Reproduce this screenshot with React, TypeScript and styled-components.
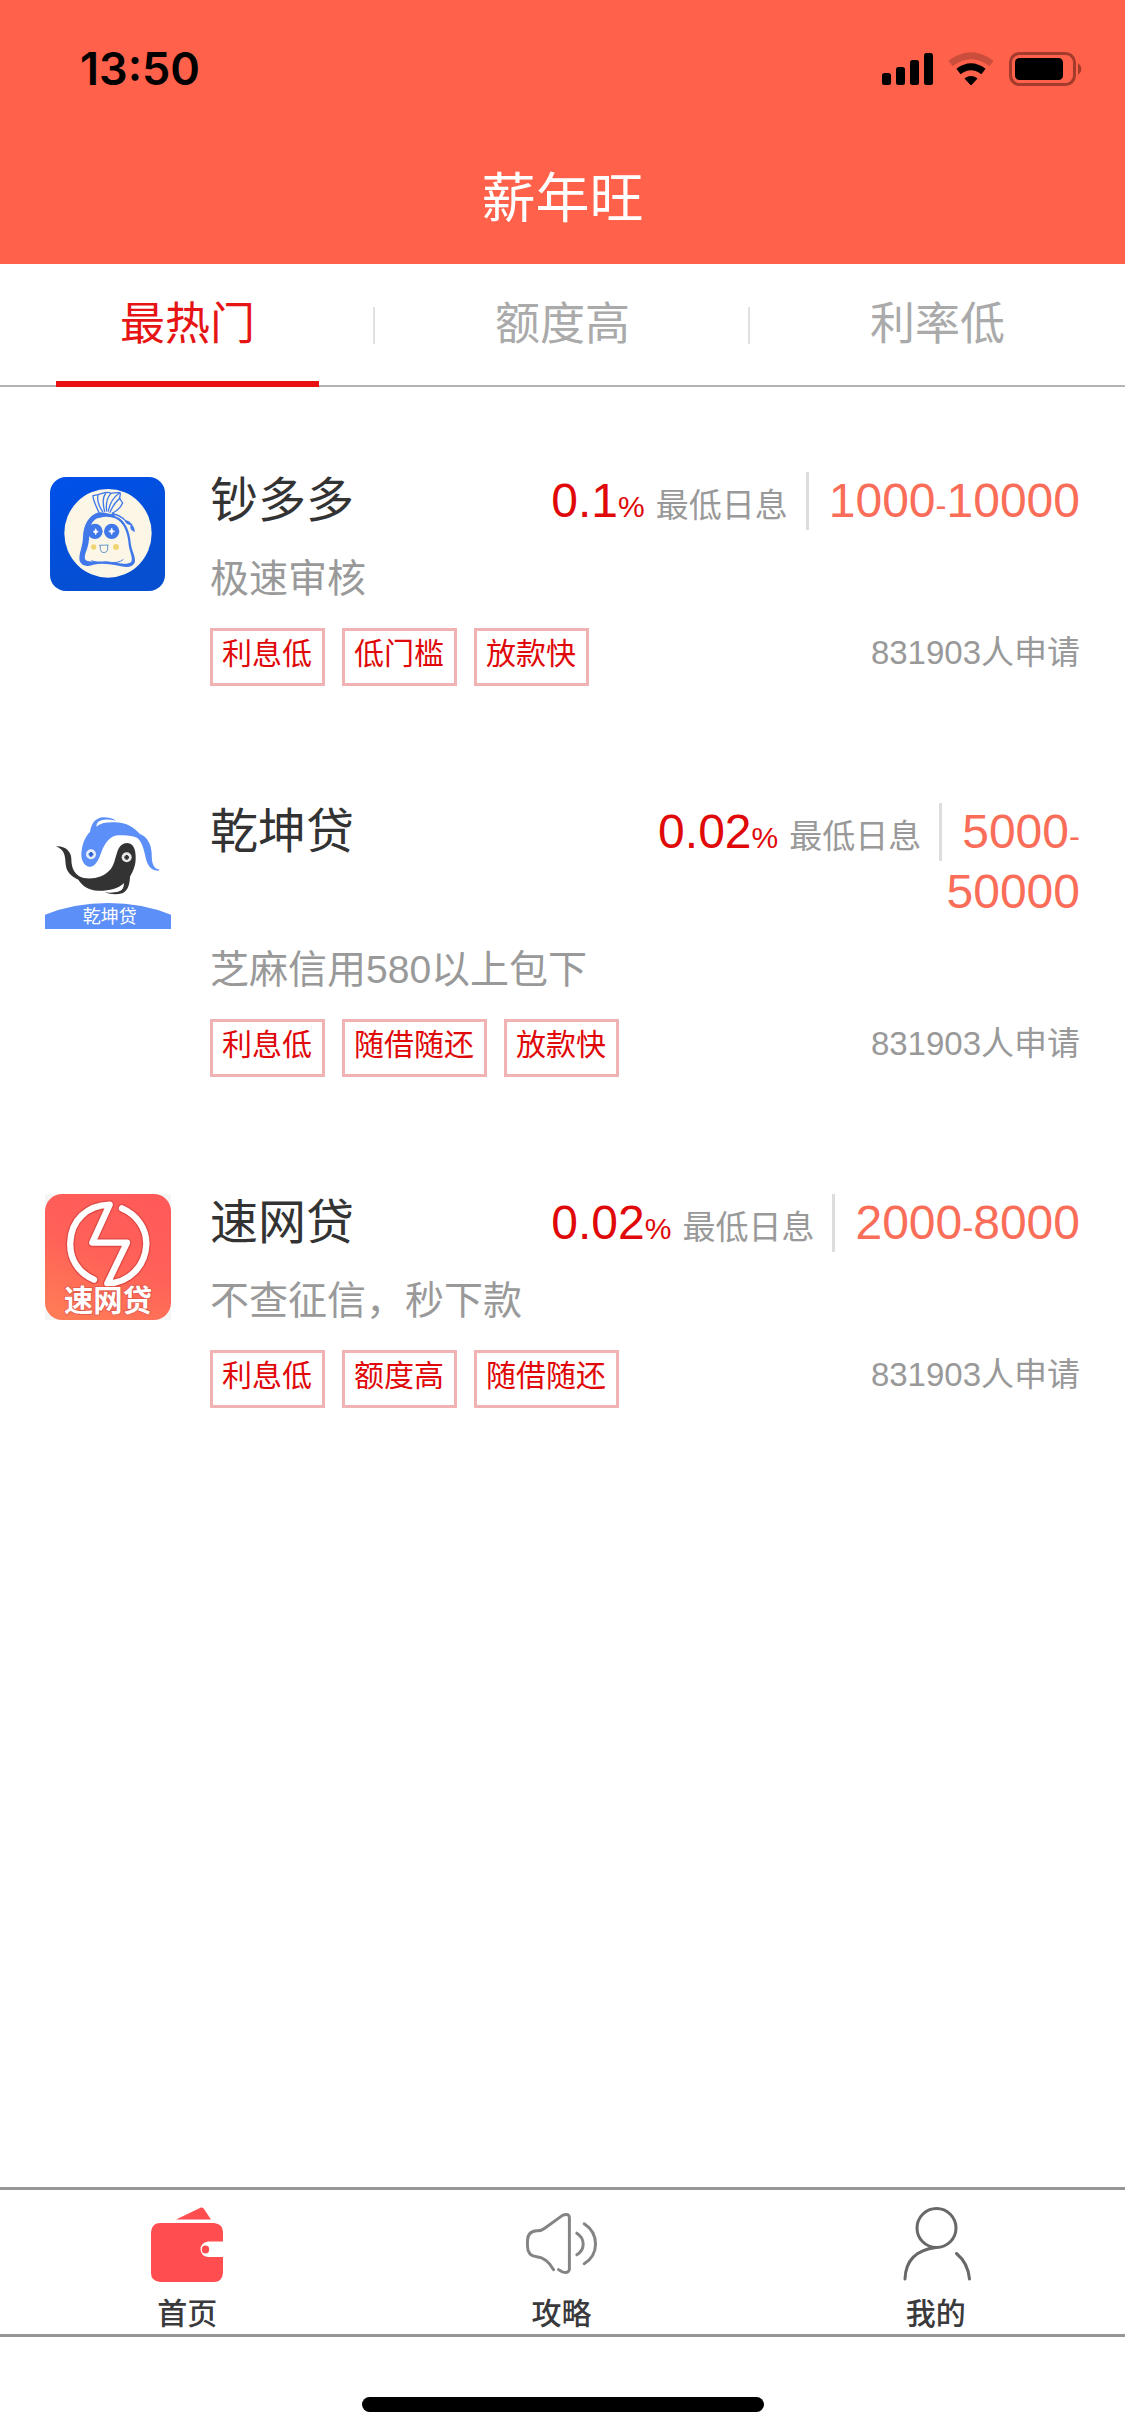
import React from "react";
import styled, { createGlobalStyle } from "styled-components";

const GlobalStyle = createGlobalStyle`
  *, *::before, *::after { box-sizing: border-box; }
  html, body { margin: 0; padding: 0; background: #fff; }
  body { font-family: "Liberation Sans", "Noto Sans CJK SC", sans-serif; color: #333; }
  h1, h2, p, ul { margin: 0; padding: 0; font-weight: 400; }
  ul { list-style: none; }
`;

const Page = styled.div`
  display: flex;
  flex-direction: column;
  min-height: 100vh;
  background: #fff;
`;

const Header = styled.header`
  background: #ff614a;
  color: #fff;
`;

const StatusBar = styled.div`
  display: flex;
  align-items: center;
  justify-content: space-between;
  height: 132px;
  padding: 6px 42px 0 80px;
  color: #000;
`;

const Clock = styled.time`
  font: 600 45px/54px Inter, "Liberation Sans", sans-serif;
`;

const StatusIcons = styled.svg`
  display: block;
  width: 202px;
  height: 36px;
`;

const Title = styled.h1`
  height: 132px;
  font-size: 54px;
  line-height: 134px;
  text-align: center;
`;

const Tabs = styled.div`
  display: flex;
  height: 123px;
  border-bottom: 2px solid #b4b4b4;
`;

const Tab = styled.button<{ $active?: boolean }>`
  position: relative;
  flex: 1;
  padding: 0;
  border: 0;
  background: none;
  font: inherit;
  font-size: 45px;
  line-height: 120px;
  color: ${(p) => (p.$active ? "#e61414" : "#aaa")};

  &::before {
    content: "";
    position: absolute;
    left: 15%;
    right: 15%;
    bottom: -2px;
    height: 6px;
    background: ${(p) => (p.$active ? "#e81212" : "transparent")};
  }

  &:not(:first-child)::after {
    content: "";
    position: absolute;
    left: -2px;
    top: 43px;
    width: 2px;
    height: 37px;
    background: #e0e0e0;
  }
`;

const LoanList = styled.ul`
  display: flex;
  flex-direction: column;
  gap: 116px;
  padding: 84px 45px 116px;
`;

const LoanItem = styled.li`
  display: flex;
  gap: 39px;
`;

const Logo = styled.svg`
  display: block;
  flex: none;
  width: 126px;
  height: 126px;
  margin-top: 1px;
`;

const LoanBody = styled.div`
  flex: 1;
  min-width: 0;
`;

const LoanHead = styled.div`
  display: flex;
  justify-content: space-between;
  line-height: 60px;
`;

const LoanName = styled.h2`
  font-size: 48px;
  line-height: 60px;
`;

const Terms = styled.p`
  max-width: 62%;
  font-size: 48px;
  text-align: right;
  color: #f96d59;
`;

const Rate = styled.span`
  display: inline-block;
  height: 58px;
  margin-right: 20px;
  padding-right: 18px;
  border-right: 3px solid #ddd;
  line-height: 58px;
  color: #e00808;
`;

const Percent = styled.span`
  font-size: 30px;
  line-height: 30px;
`;

const RateLabel = styled.span`
  margin-left: 11px;
  font-size: 33px;
  line-height: 33px;
  color: #999;
`;

const Dash = styled.span`
  font-size: 33px;
  line-height: 33px;
`;

const Slogan = styled.p`
  margin-top: 18px;
  font-size: 39px;
  line-height: 60px;
  color: #999;
`;

const LoanFoot = styled.div`
  display: flex;
  justify-content: space-between;
  margin-top: 19px;
`;

const Tags = styled.div`
  display: flex;
  gap: 17px;
`;

const Tag = styled.span`
  height: 58px;
  padding: 0 10px 0 9px;
  border: 3px solid #f0b2b2;
  font-size: 30px;
  line-height: 45px;
  color: #e00808;
`;

const Applied = styled.span`
  font-size: 33px;
  line-height: 49px;
  color: #999;
`;

const BottomNav = styled.nav`
  display: flex;
  height: 150px;
  margin-top: auto;
  padding-right: 2px;
  border-top: 3px solid #969696;
  border-bottom: 3px solid #969696;
`;

const NavLink = styled.a`
  display: flex;
  flex: 1;
  flex-direction: column;
  align-items: center;
  padding-top: 15px;
  color: #3a3a3c;
  text-decoration: none;
  font-size: 30px;
  font-weight: 500;
  line-height: 36px;
`;

const NavIcon = styled.svg`
  display: block;
  width: 72px;
  height: 78px;
  margin-bottom: 13px;
  fill: none;
  stroke-width: 3;
  stroke-linecap: round;
  stroke-linejoin: round;
`;

const HomeArea = styled.div`
  display: flex;
  justify-content: center;
  height: 99px;
  padding-top: 60px;
`;

const HomeBar = styled.div`
  width: 402px;
  height: 15px;
  border-radius: 8px;
  background: #000;
`;

const MoneyBagLogo = () => (
  <Logo viewBox="45 36 378 378" aria-hidden="true">
    <defs>
      <linearGradient id="bagBlue" x1="0" y1="0" x2="0.4" y2="1">
        <stop offset="0" stopColor="#0050ea" />
        <stop offset="1" stopColor="#064fd0" />
      </linearGradient>
    </defs>
    <rect x="60" y="51" width="345" height="342" rx="48" fill="url(#bagBlue)" />
    <ellipse cx="234" cy="220" rx="131" ry="133" fill="#fbf6e6" />
    <path
      d="M207 158C197 136 188 118 189 107Q200 106 217 100Q233 94 243 100Q255 97 270 98Q272 107 268 114L278 129Q269 149 246 160"
      fill="#fbf6e6"
      stroke="#4078ea"
      strokeWidth="4"
    />
    <path
      d="M218 155C205 137 201 117 204 107M224 154C218 131 218 111 227 100M230 153C227 132 232 113 242 101M235 153C239 132 250 112 268 99M240 157C246 143 253 127 270 115"
      fill="none"
      stroke="#4078ea"
      strokeWidth="4"
      strokeLinecap="round"
    />
    <path
      d="M206 157C175 167 160 196 159 232C158 262 145 282 149 303Q159 325 190 314C220 308 244 314 273 319Q307 326 315 306C316 285 304 272 302 247C299 211 284 180 260 169Q237 158 206 157Z"
      fill="#4078ea"
    />
    <path
      d="M210 173C187 175 179 199 178 223C177 252 172 266 166 281Q160 299 173 303C194 307 226 301 251 307Q292 316 304 305C310 292 297 275 295 246C292 213 278 184 255 175Q234 166 210 173Z"
      fill="#fbf6e6"
    />
    <path d="M184 302Q204 313 229 306Q267 312 280 298" fill="none" stroke="#4078ea" strokeWidth="3" />
    <path d="M247 158Q273 164 287 180Q311 187 315 216Q296 209 302 196Q286 193 283 181Q265 166 242 164Z" fill="#4078ea" />
    <path d="M255 167Q283 177 288 194" fill="none" stroke="#fbf6e6" strokeWidth="3" />
    <circle cx="195" cy="214" r="23" fill="#4078ea" />
    <circle cx="245" cy="214" r="23" fill="#4078ea" />
    <path
      d="M197 206Q198 214 205 215Q198 216 197 224Q196 216 189 215Q196 214 197 206ZM245 204Q246 213 254 214Q246 215 245 224Q244 215 236 214Q244 213 245 204Z"
      fill="#fff"
      stroke="#fff"
      strokeWidth="2"
    />
    <circle cx="191" cy="261" r="8" fill="#f3d473" />
    <circle cx="258" cy="261" r="9" fill="#f3d473" />
    <path d="M207 256L236 255M211 256V268Q212 278 222 278Q233 277 233 267V255" fill="none" stroke="#6a9ad0" strokeWidth="3" />
  </Logo>
);

const TwinFishLogo = () => (
  <Logo viewBox="45 39 378 378" aria-hidden="true">
    <path
      d="M180 231C158 228 150 203 156 175C160 153 169 136 180 126C184 99 197 83 221 82Q242 82 258 92Q219 83 204 96Q198 103 199 110Q214 97 246 97C286 94 311 111 330 132C351 140 364 162 365 190C365 221 370 237 389 239Q386 244 375 241C357 236 349 216 346 198C341 176 335 155 322 144Q302 134 267 136C241 136 226 157 215 184C207 207 199 228 180 231Z"
      fill="#5c90f8"
    />
    <path
      d="M78 169C104 167 124 183 124 207C124 237 135 257 161 264C190 269 220 261 236 244C254 228 255 202 264 180C269 168 278 159 292 159C312 161 318 181 317 208C316 231 308 246 300 260C299 285 293 302 277 310Q252 317 223 307C253 310 272 306 279 294L280 281C265 295 235 303 205 302C176 301 157 288 145 269C121 258 109 245 107 222C105 198 105 180 78 169Z"
      fill="#333"
    />
    <path d="M279 281Q280 300 255 306Q282 305 282 280" fill="#fff" />
    <circle cx="183" cy="193" r="15" fill="#e9effc" />
    <path d="M183 186V200M176 193H190" stroke="#2a62c8" strokeWidth="7" />
    <circle cx="290" cy="202" r="15" fill="#e8e8e8" />
    <path d="M290 195V209M283 202H297" stroke="#333" strokeWidth="7" />
    <path d="M45 374Q133 339 235 339Q335 339 423 374V417H45Z" fill="#5c90f8" />
    <text x="239" y="400" textAnchor="middle" fontSize="54" fill="#fff" fontFamily="'Noto Sans CJK SC', sans-serif">
      乾坤贷
    </text>
  </Logo>
);

const BOLT =
  "M192 299C144 278 118 235 121 187C123 122 170 76 239 74L187 188H291L232 310C298 309 346 258 349 193C350 145 320 104 276 85";

const LightningLogo = () => (
  <Logo viewBox="45 42 378 378" aria-hidden="true">
    <defs>
      <linearGradient id="boltRed" x1="0.7" y1="0" x2="0.3" y2="1">
        <stop offset="0" stopColor="#ff5a59" />
        <stop offset="0.5" stopColor="#ff6158" />
        <stop offset="1" stopColor="#ff7a56" />
      </linearGradient>
    </defs>
    <rect x="45" y="42" width="378" height="378" fill="#f5f5f5" />
    <rect x="45" y="42" width="378" height="378" rx="52" fill="url(#boltRed)" />
    <g fill="none" strokeLinecap="round" strokeLinejoin="round">
      <path d={BOLT} stroke="#e04a46" strokeWidth="27" />
      <path d={BOLT} stroke="#fff" strokeWidth="19" />
    </g>
    <text
      x="234"
      y="394"
      textAnchor="middle"
      fontSize="88"
      fontWeight="700"
      fill="#fff"
      stroke="#e2584a"
      strokeWidth="5"
      paintOrder="stroke"
      fontFamily="'Noto Sans CJK SC', sans-serif"
    >
      速网贷
    </text>
  </Logo>
);

const WalletIcon = () => (
  <NavIcon viewBox="0 0 72 78" aria-hidden="true">
    <path d="M25 14.500L50 2.500Q52 2 53 4L60 14.500Z" fill="#ff4d50" />
    <path
      d="M9 18H63Q72 19 72 27V36.500H57Q49.500 38 49.500 44.500Q50 51 57 52H72V68Q71 77 63 77H9Q0 76 0 68V27Q1 18 9 18Z"
      fill="#ff4d50"
    />
    <ellipse cx="54.500" cy="44.500" rx="3.700" ry="4" fill="#ff4d50" />
  </NavIcon>
);

const SpeakerIcon = () => (
  <NavIcon viewBox="15 15 73 78" stroke="#848484" aria-hidden="true">
    <path d="M44 80Q37 68 27 67Q17.500 66 17.500 56V51Q17.500 41 27 40.500Q31 41 35 38L53 25Q60 22 60 28V80Q58 86 49 80" />
    <path d="M67.500 43Q74 47 74 54Q74 61 67.500 65M75 33.500Q86.500 41 86.500 54Q86.500 67 75 74" />
  </NavIcon>
);

const PersonIcon = () => (
  <NavIcon viewBox="-1 0 72 78" stroke="#686868" aria-hidden="true">
    <ellipse cx="35.500" cy="23" rx="19.500" ry="19.500" />
    <path d="M35 42.500Q5 46 4 74M55.500 48.500Q67 58 68.500 74" />
  </NavIcon>
);

const loans = [
  {
    name: "钞多多",
    logo: MoneyBagLogo,
    rate: "0.1",
    min: "1000",
    max: "10000",
    slogan: "极速审核",
    tags: ["利息低", "低门槛", "放款快"],
  },
  {
    name: "乾坤贷",
    logo: TwinFishLogo,
    rate: "0.02",
    min: "5000",
    max: "50000",
    slogan: "芝麻信用580以上包下",
    tags: ["利息低", "随借随还", "放款快"],
  },
  {
    name: "速网贷",
    logo: LightningLogo,
    rate: "0.02",
    min: "2000",
    max: "8000",
    slogan: "不查征信，秒下款",
    tags: ["利息低", "额度高", "随借随还"],
  },
];

const tabs = ["最热门", "额度高", "利率低"];

const navItems = [
  { label: "首页", icon: WalletIcon },
  { label: "攻略", icon: SpeakerIcon },
  { label: "我的", icon: PersonIcon },
];

export default function App() {
  const [active, setActive] = React.useState(0);
  return (
    <Page>
      <GlobalStyle />
      <Header>
        <StatusBar>
          <Clock>13:50</Clock>
          <StatusIcons viewBox="0 0 202 36" aria-hidden="true">
            <rect x="1" y="22" width="9" height="12" rx="2.500" />
            <rect x="15" y="16" width="9" height="18" rx="2.500" />
            <rect x="29" y="9" width="9" height="25" rx="2.500" />
            <rect x="43" y="2" width="9" height="32" rx="2.500" />
            <path d="M69.500 12.500Q90 -3 110.500 12.500" fill="none" stroke="#cb4e3c" strokeWidth="7" />
            <path d="M77.500 20.500Q90 11 102.500 20.500" fill="none" stroke="#000" strokeWidth="7" />
            <path d="M84 27.500Q90 23.500 96 27.500L90 34Z" stroke="#000" strokeLinejoin="round" />
            <rect x="129.500" y="2.500" width="64" height="31" rx="9" fill="none" stroke="#a53b2c" strokeWidth="3" />
            <rect x="134" y="7" width="48" height="22" rx="4.500" />
            <path d="M197 12Q204 18 197 24Z" fill="#a53b2c" />
          </StatusIcons>
        </StatusBar>
        <Title>薪年旺</Title>
      </Header>

      <Tabs role="tablist">
        {tabs.map((t, i) => (
          <Tab key={t} type="button" role="tab" aria-selected={i === active} $active={i === active} onClick={() => setActive(i)}>
            {t}
          </Tab>
        ))}
      </Tabs>

      <LoanList>
        {loans.map((l) => (
          <LoanItem key={l.name}>
            <l.logo />
            <LoanBody>
              <LoanHead>
                <LoanName>{l.name}</LoanName>
                <Terms>
                  <Rate>
                    {l.rate}
                    <Percent>%</Percent>
                    <RateLabel>最低日息</RateLabel>
                  </Rate>
                  {l.min}
                  <Dash>-</Dash>
                  <wbr />
                  {l.max}
                </Terms>
              </LoanHead>
              <Slogan>{l.slogan}</Slogan>
              <LoanFoot>
                <Tags>
                  {l.tags.map((t) => (
                    <Tag key={t}>{t}</Tag>
                  ))}
                </Tags>
                <Applied>831903人申请</Applied>
              </LoanFoot>
            </LoanBody>
          </LoanItem>
        ))}
      </LoanList>

      <BottomNav>
        {navItems.map((n) => (
          <NavLink key={n.label} href="#">
            <n.icon />
            {n.label}
          </NavLink>
        ))}
      </BottomNav>
      <HomeArea>
        <HomeBar />
      </HomeArea>
    </Page>
  );
}
